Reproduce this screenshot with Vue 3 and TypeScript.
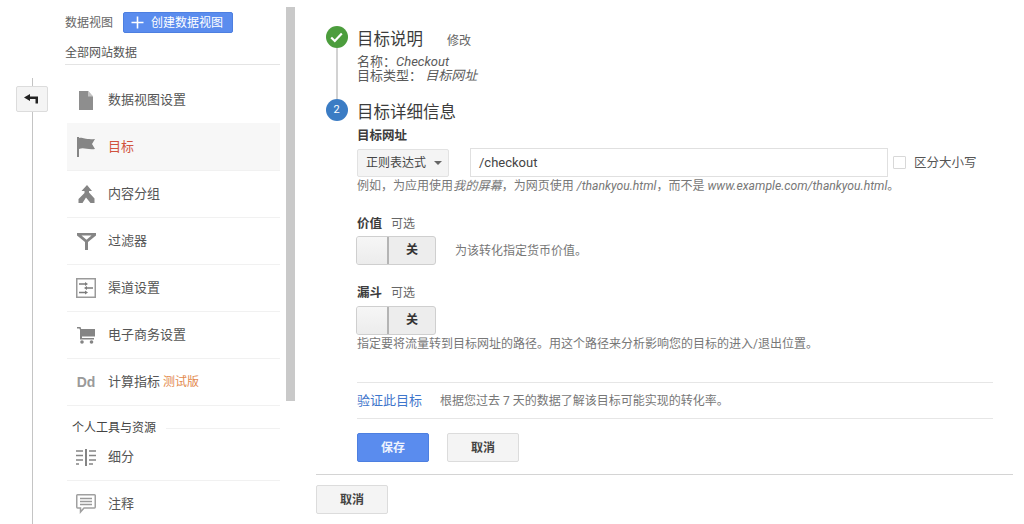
<script setup lang="ts">
interface NavItem { label: string; icon: string; active?: boolean; beta?: string }
const navItems: NavItem[] = [
  { label: '数据视图设置', icon: 'doc' },
  { label: '目标', icon: 'flag', active: true },
  { label: '内容分组', icon: 'group' },
  { label: '过滤器', icon: 'filter' },
  { label: '渠道设置', icon: 'channel' },
  { label: '电子商务设置', icon: 'cart' },
  { label: '计算指标', icon: 'dd', beta: '测试版' },
]
const toolItems: NavItem[] = [
  { label: '细分', icon: 'segment' },
  { label: '注释', icon: 'note' },
]
</script>

<template>
  <div class="page">
    <div class="rail">
      <button class="back" type="button" aria-label="返回">
        <svg width="14" height="10" viewBox="0 0 14 10"><path d="M6 0 L0 3.500 L6 7 V5 H11.500 V9.500 H14 V2.500 H6 Z" fill="#222" /></svg>
      </button>
    </div>

    <aside class="side">
      <div class="side-head">
        <span>数据视图</span>
        <button class="create" type="button">
          <svg class="plus" width="13" height="13" viewBox="0 0 13 13"><path d="M6.500 0.500 V12.500 M0.500 6.500 H12.500" stroke="#fff" stroke-width="1.600" /></svg>
          创建数据视图
        </button>
      </div>
      <div class="side-sub">全部网站数据</div>
      <ul class="nav">
        <li v-for="item in navItems" :key="item.label" class="nav-item" :class="{ active: item.active }">
          <span class="nav-icon">
            <svg v-if="item.icon === 'doc'" width="16" height="19" viewBox="0 0 16 19"><path d="M1 0 H10 L15 5.500 V19 H1 Z" fill="#8e8e8e" /><path d="M10 0 V5.500 H15 Z" fill="#c4c4c4" /></svg>
            <svg v-else-if="item.icon === 'flag'" width="20" height="20" viewBox="0 0 20 20"><path d="M1 0 H3 V20 H1 Z M3 1 C7 0 9 3 19 2 L16 7 L19 12 C11 13 8 10 3 12 Z" fill="#858585" /></svg>
            <svg v-else-if="item.icon === 'group'" width="17" height="18" viewBox="0 0 17 18"><path d="M9 0 L14 6 H11 V7.500 L16.500 13.500 V18 H12.500 L8 12.500 L4.500 18 H0.500 V14 L6.500 8 V6 H3.500 Z" fill="#858585" /></svg>
            <svg v-else-if="item.icon === 'filter'" width="19" height="17" viewBox="0 0 19 17"><path d="M0 0 H19 V2.500 L11 9 V17 H8 V9 L0 2.500 Z M4.500 2.500 L9.500 6.800 L14.500 2.500 Z" fill="#858585" fill-rule="evenodd" /></svg>
            <svg v-else-if="item.icon === 'channel'" width="20" height="20" viewBox="0 0 20 20"><rect x="0.750" y="0.750" width="18.500" height="18.500" fill="none" stroke="#9a9a9a" stroke-width="1.500" /><path d="M3 6 H10 M10 10 H17 M3 14.500 H10" stroke="#7c7c7c" stroke-width="1.400" /><path d="M9 4 L12 6 L9 8 Z M11 8 L8 10 L11 12 Z M9 12.500 L12 14.500 L9 16.500 Z" fill="#7c7c7c" /></svg>
            <svg v-else-if="item.icon === 'cart'" width="18" height="17" viewBox="0 0 18 17"><path d="M0 0 H3.500 L4.200 2 H18 V9.500 H5 V11 H17 V12.500 H3 V3 L2.400 1.500 H0 Z" fill="#858585" /><circle cx="5" cy="15" r="1.800" fill="#858585" /><circle cx="14.500" cy="15" r="1.800" fill="#858585" /></svg>
            <b v-else-if="item.icon === 'dd'" class="dd">Dd</b>
          </span>
          <span class="nav-label">{{ item.label }}</span>
          <span v-if="item.beta" class="beta">{{ item.beta }}</span>
        </li>
      </ul>
      <div class="section-title"><span>个人工具与资源</span><i></i></div>
      <ul class="nav tools">
        <li v-for="item in toolItems" :key="item.label" class="nav-item">
          <span class="nav-icon">
            <svg v-if="item.icon === 'segment'" width="20" height="17" viewBox="0 0 20 17"><path d="M9 0 H11 V17 H9 Z" fill="#858585" /><path d="M0 2 H7 M0 6.500 H7 M0 11 H7 M0 15 H3 M13 2 H20 M13 6.500 H20 M13 11 H20 M13 15 H17" stroke="#858585" stroke-width="1.600" /></svg>
            <svg v-else width="20" height="20" viewBox="0 0 20 20"><path d="M1.500 0.750 H18.500 Q19.250 0.750 19.250 1.500 V13 Q19.250 14 18.500 14 H8 L4.500 18 V14 H1.500 Q0.750 14 0.750 13 V1.500 Q0.750 0.750 1.500 0.750 Z" fill="#fff" stroke="#a0a0a0" stroke-width="1.500" /><path d="M4 4.500 H16 M4 7.500 H16 M4 10.500 H16" stroke="#9a9a9a" stroke-width="1.400" /></svg>
          </span>
          <span class="nav-label">{{ item.label }}</span>
        </li>
      </ul>
    </aside>

    <div class="scroll-thumb"></div>

    <main class="main">
      <div class="content">
        <section class="step step-done">
          <div class="marker">
            <span class="dot green">
              <svg width="13" height="11" viewBox="0 0 13 11"><path d="M1.200 5.500 L4.800 9 L11.800 1.500" fill="none" stroke="#fff" stroke-width="2.200" /></svg>
            </span>
            <span class="connector"></span>
          </div>
          <div class="step-body">
            <div class="step-head"><h2>目标说明</h2><a class="edit">修改</a></div>
            <div class="summary">名称：<em>Checkout</em></div>
            <div class="summary">目标类型： <em>目标网址</em></div>
          </div>
        </section>

        <section class="step step-active">
          <div class="marker"><span class="dot blue">2</span></div>
          <div class="step-body">
            <h2>目标详细信息</h2>
            <div class="label url-label">目标网址</div>
            <div class="url-row">
              <button class="select" type="button">正则表达式<span class="caret"></span></button>
              <div class="input">/checkout</div>
              <label class="check"><span class="box"></span>区分大小写</label>
            </div>
            <p class="help">例如，为应用使用<em>我的屏幕</em>，为网页使用 <em>/thankyou.html</em>，而不是 <em>www.example.com/thankyou.html</em>。</p>

            <div class="label opt value-label">价值<span>可选</span></div>
            <div class="toggle-row">
              <div class="toggle"><span class="knob"></span><span class="off">关</span></div>
              <span class="toggle-desc">为该转化指定货币价值。</span>
            </div>

            <div class="label opt funnel-label">漏斗<span>可选</span></div>
            <div class="toggle funnel-toggle"><span class="knob"></span><span class="off">关</span></div>
            <p class="help funnel-help">指定要将流量转到目标网址的路径。用这个路径来分析影响您的目标的进入/退出位置。</p>

            <div class="verify"><a>验证此目标</a><span>根据您过去 7 天的数据了解该目标可能实现的转化率。</span></div>

            <div class="actions">
              <button class="btn primary" type="button">保存</button>
              <button class="btn" type="button">取消</button>
            </div>
          </div>
        </section>
      </div>
      <div class="footer"><button class="btn" type="button">取消</button></div>
    </main>
  </div>
</template>

<style>
html, body { margin: 0; background: #fff; }
</style>

<style scoped>
* { box-sizing: border-box; }
.page {
  display: flex;
  width: 1024px;
  height: 524px;
  overflow: hidden;
  background: #fff;
  color: #555;
  font: 12px/16px Roboto, "Noto Sans CJK SC", sans-serif;
}
button { font: inherit; }
ul { list-style: none; margin: 0; padding: 0; }
h2 { height: 22px; margin: 0; font-size: 16.500px; line-height: 24px; font-weight: 400; color: #3c3c3c; }
p { margin: 0; }
em { font-style: italic; }

.rail { flex: none; width: 33px; margin: 78px 0 0 32px; border-left: 1px solid #c4c4c4; }
.back {
  display: flex; align-items: center; justify-content: center;
  width: 32px; height: 26px; margin: 8px 0 0 -17px; padding: 0 3px 0 0;
  background: #f4f4f4; border: 1px solid #dcdcdc; border-radius: 2px;
}

.side { flex: none; width: 215px; }
.side-head { display: flex; align-items: center; gap: 10px; height: 21px; margin-top: 12px; color: #666; }
.create {
  display: flex; align-items: center; width: 110px; height: 21px; padding: 0 0 0 7px;
  background: #5a8cee; border: 1px solid #4d7fe0; border-radius: 2px; color: #fff;
}
.plus { flex: none; margin-right: 7px; }
.side-sub { height: 32px; padding-top: 12px; border-bottom: 1px solid #e4e4e4; color: #555; }
.nav { margin-left: 2px; }
.nav-item {
  display: flex; align-items: center; height: 47px; padding-left: 8px;
  border-bottom: 1px solid #f1f1f1; color: #555; font-size: 13px;
}
.nav-item.active { height: 48px; background: #f7f7f7; color: #d1533f; }
.nav-item:first-child { height: 58px; padding-top: 12px; border-bottom: none; }
.nav-icon { display: flex; align-items: center; justify-content: center; width: 22px; margin-right: 11px; flex: none; }
.dd { font: 700 14px/16px "Liberation Sans", sans-serif; color: #9a9a9a; }
.beta { margin-left: 3px; font-size: 12px; color: #e38a4e; }
.section-title {
  display: flex; align-items: center; gap: 10px;
  height: 20px; margin-top: 12px; margin-left: 7px;
  color: #444;
}
.section-title i { flex: 1; height: 1px; background: #f1f1f1; }
.tools .nav-item:first-child { height: 43px; padding-top: 0; padding-bottom: 4px; border-bottom: 1px solid #f1f1f1; }
.tools .nav-item:last-child { border-bottom: none; padding-bottom: 1px; }

.scroll-thumb { flex: none; width: 9px; height: 394px; margin: 7px 0 0 6px; background: #c9c9c9; }

.main { flex: none; width: 697px; margin-left: 21px; }
.content { height: 475px; padding: 26px 20px 0 10px; border-bottom: 1px solid #d4d4d4; }
.step { display: flex; }
.marker { flex: none; display: flex; flex-direction: column; align-items: center; width: 21px; margin-right: 10px; }
.dot {
  flex: none; display: flex; align-items: center; justify-content: center;
  width: 22px; height: 22px; border-radius: 50%; color: #fff; font-size: 11px;
}
.green { background: #4c9d3d; }
.blue { background: #3b7cc4; }
.connector { flex: 1; width: 2px; background: #d2d2d2; }
.step-done { height: 73px; }
.step-body { flex: 1; min-width: 0; }
.step-head { display: flex; align-items: center; gap: 24px; height: 22px; margin-top: 2px; }
.edit { padding-top: 3px; color: #666; }
.summary { font-size: 13px; line-height: 14px; color: #5a5a5a; }
.step-head + .summary { margin-top: 5px; }
.step-active h2 { margin-top: 2px; }
.label { height: 16px; color: #3c3c3c; font-size: 12.500px; line-height: 18px; font-weight: 700; }
.url-label { margin-top: 4px; }
.url-row { display: flex; align-items: center; margin-top: 5px; height: 29px; }
.select {
  display: flex; align-items: center; width: 92px; height: 28px; padding: 0 0 0 8px;
  background: #f4f4f4; border: 1px solid #e2e2e2; border-radius: 2px; color: #444;
}
.caret { margin-left: 8px; border: 4px solid transparent; border-top-color: #666; border-bottom: none; }
.input {
  display: flex; align-items: center; width: 418px; height: 29px; margin-left: 21px; padding-left: 8px;
  border: 1px solid #e0e0e0; font-size: 13px; color: #444;
}
.check { display: flex; align-items: center; margin-left: 5px; font-size: 12.500px; color: #555; }
.box { width: 13px; height: 13px; margin-right: 8px; border: 1px solid #d8d8d8; border-radius: 1px; }
.help { margin-top: 1px; color: #777; white-space: nowrap; }
.help em { font-size: 12.200px; }
.value-label { margin-top: 21px; }
.opt span { margin-left: 9px; font-size: 12px; font-weight: 400; color: #666; }
.toggle-row { display: flex; align-items: center; }
.toggle {
  display: flex; width: 80px; height: 29px; margin: 5px 0 0 -1px;
  background: #ededed; border: 1px solid #cfcfcf; border-radius: 3px; overflow: hidden;
}
.funnel-toggle { margin-top: 6px; }
.knob { width: 32px; background: linear-gradient(#f6f6f6, #ececec); border-right: 2px solid #b4b4b4; }
.off { flex: 1; text-align: center; line-height: 27px; font-weight: 700; color: #333; }
.toggle-desc { margin: 5px 0 0 19px; color: #777; }
.funnel-label { margin-top: 19px; }
.funnel-help { margin-top: 1px; }
.verify {
  display: flex; align-items: center; gap: 18px; height: 37px; margin-top: 30px;
  border-top: 1px solid #e6e6e6; border-bottom: 1px solid #e6e6e6; color: #777;
}
.verify a { font-size: 13px; color: #3f76cc; }
.actions { display: flex; gap: 18px; margin-top: 14px; }
.btn {
  width: 72px; height: 29px; padding: 0;
  background: #f4f4f4; border: 1px solid #dcdcdc; border-radius: 2px; color: #444; font-weight: 700;
}
.primary { background: #5a8cee; border-color: #4d7fe0; color: #eef3fd; }
.footer { padding-top: 10px; }
</style>
